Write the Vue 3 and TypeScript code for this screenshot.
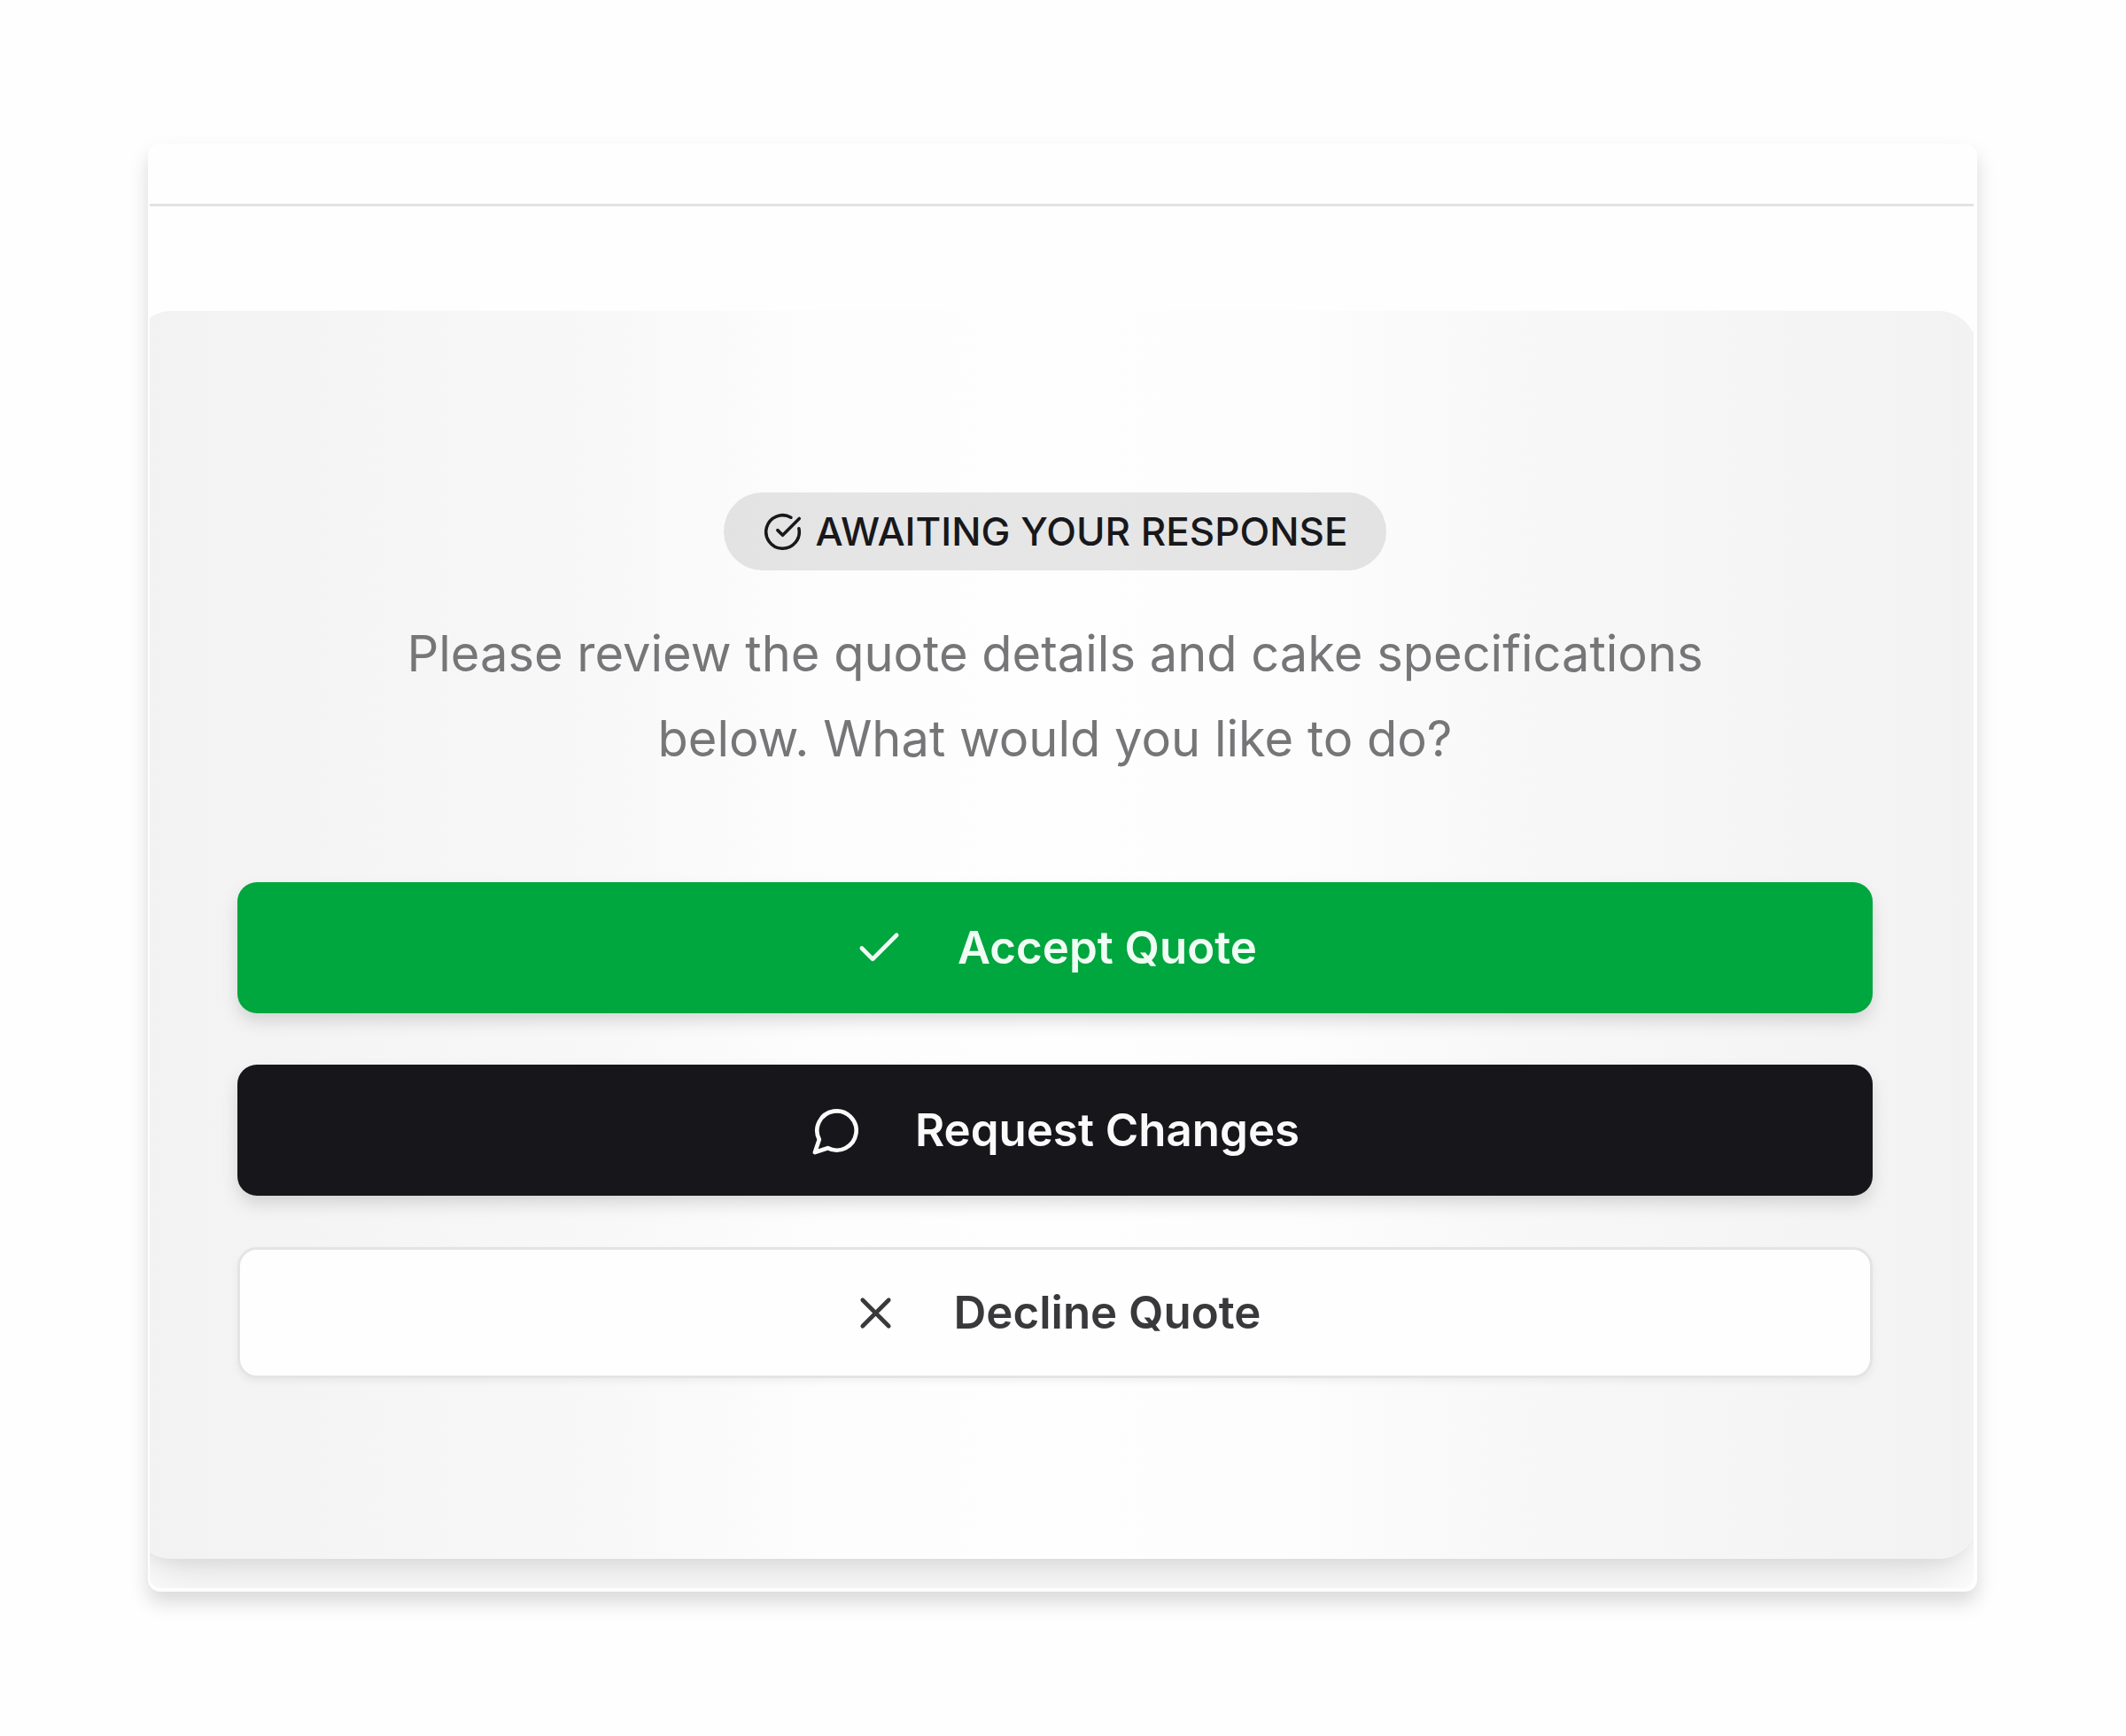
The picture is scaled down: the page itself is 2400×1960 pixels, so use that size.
<script setup lang="ts">
interface Action {
  id: string
  label: string
  paths: string[]
}

const actions: Action[] = [
  { id: 'accept', label: 'Accept Quote', paths: ['M20 6 9 17l-5-5'] },
  { id: 'changes', label: 'Request Changes', paths: ['M7.9 20A9 9 0 1 0 4 16.1L2 22Z'] },
  { id: 'decline', label: 'Decline Quote', paths: ['M18 6 6 18', 'm6 6 12 12'] },
]
</script>

<template>
  <main class="page">
    <section class="card">
      <div class="viewport">
        <div class="divider"></div>
        <div class="panel">
          <div class="badge">
            <svg class="badge-icon" viewBox="0 0 24 24" aria-hidden="true">
              <path d="M21.801 10A10 10 0 1 1 17 3.335" />
              <path d="m9 11 3 3L22 4" />
            </svg>
            <span>AWAITING YOUR RESPONSE</span>
          </div>
          <p class="message">
            Please review the quote details and cake specifications below. What would you like to do?
          </p>
          <div class="actions">
            <button v-for="action in actions" :key="action.id" type="button" class="action" :class="action.id">
              <svg class="action-icon" viewBox="0 0 24 24" aria-hidden="true">
                <path v-for="d in action.paths" :key="d" :d="d" />
              </svg>
              <span>{{ action.label }}</span>
            </button>
          </div>
        </div>
      </div>
    </section>
  </main>
</template>

<style>
body {
  margin: 0;
  background: #fefefe;
}
</style>

<style scoped>
.page {
  box-sizing: border-box;
  padding: 162px 168px 162px 167px;
  font-family: Inter, 'Liberation Sans', sans-serif;
}

.card {
  padding: 0 4px 4px 2px;
  border-radius: 14px;
  background: #fefefe;
  box-shadow: 0 12px 22px rgba(0, 0, 0, 0.15);
}

.viewport {
  overflow: hidden;
  padding: 68px 0 33px;
  border-radius: 12px;
}

.divider {
  height: 3px;
  margin-bottom: 118px;
  background: #e3e3e3;
}

.panel {
  display: flex;
  flex-direction: column;
  align-items: center;
  margin: 0 -4px 0 -19px;
  padding: 205px 118px 204px;
  border-radius: 44px;
  background: linear-gradient(
    90deg,
    #f2f2f2,
    #f5f5f5 12%,
    #f8f8f8 26%,
    #fdfdfd 38%,
    #fefefe 50%,
    #fdfdfd 62%,
    #f8f8f8 74%,
    #f5f5f5 88%,
    #f2f2f2
  );
  box-shadow:
    0 36px 54px -10px rgba(0, 0, 0, 0.1),
    0 14px 22px -14px rgba(0, 0, 0, 0.1);
}

.badge {
  display: flex;
  align-items: center;
  gap: 15px;
  height: 88px;
  padding: 0 44px;
  border-radius: 44px;
  background: rgba(24, 24, 27, 0.1);
  color: #18181b;
  font-size: 44px;
  font-weight: 500;
  line-height: 60px;
  white-space: nowrap;
}

.badge-icon {
  width: 45px;
  height: 45px;
}

.message {
  max-width: 1560px;
  margin: 46px 0 114px;
  color: #767678;
  font-size: 56px;
  line-height: 96px;
  text-align: center;
}

.actions {
  display: flex;
  flex-direction: column;
  gap: 58px;
  align-self: stretch;
}

.action {
  display: flex;
  align-items: center;
  justify-content: center;
  gap: 59px;
  box-sizing: border-box;
  height: 148px;
  padding: 0 59px;
  border: 0;
  border-radius: 22px;
  box-shadow: 0 10px 20px -2px rgba(0, 0, 0, 0.15);
  font-family: inherit;
  font-size: 51px;
  font-weight: 600;
  line-height: 72px;
  cursor: pointer;
}

.action-icon {
  width: 59px;
  height: 59px;
}

.badge-icon,
.action-icon {
  flex: none;
  fill: none;
  stroke: currentColor;
  stroke-width: 1.9;
  stroke-linecap: round;
  stroke-linejoin: round;
}

.accept {
  background: #00a63e;
  color: #f0fdf4;
}

.changes {
  background: #17161a;
  color: #fafafa;
}

.decline {
  border: 3px solid #e4e4e5;
  background: #fefefe;
  box-shadow: 0 4px 8px rgba(0, 0, 0, 0.05);
  color: #39393c;
}
</style>
